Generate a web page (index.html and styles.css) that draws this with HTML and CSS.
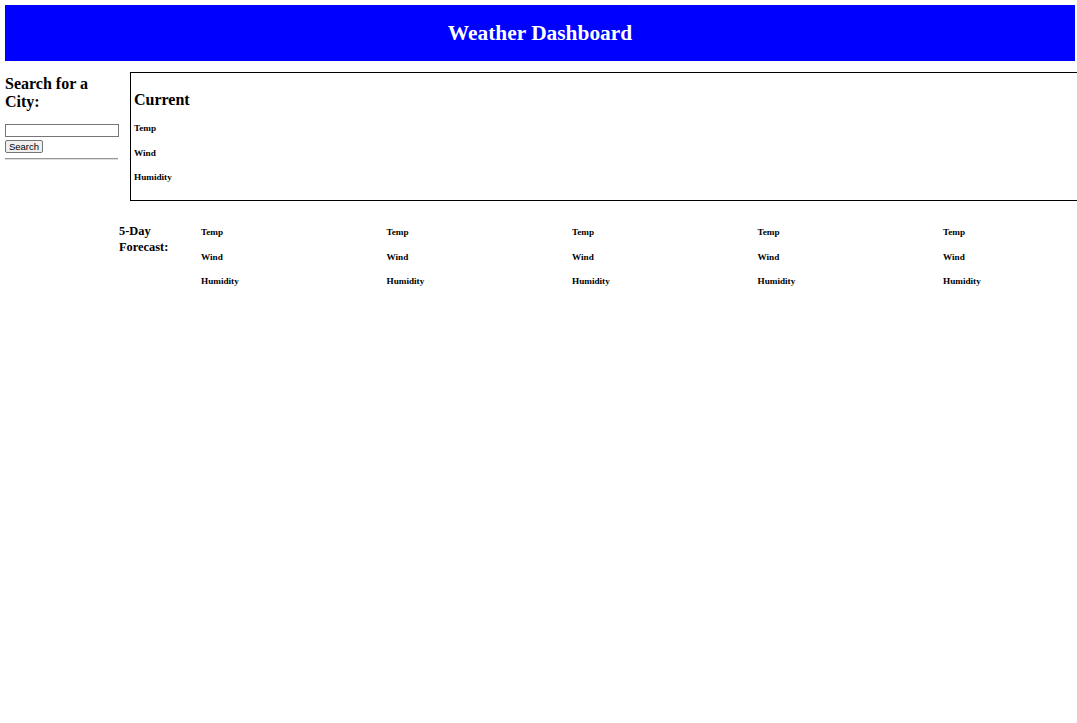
FILE: index.html
```html
<!DOCTYPE html>
<html>
<head>
<meta charset="utf-8">
<title>Weather Dashboard</title>
<link rel="stylesheet" href="styles.css">
</head>
<body>
<header class="top">
  <h1 class="title">Weather Dashboard</h1>
</header>
<div class="main">
  <aside class="side">
    <h3 class="side-title">Search for a City:</h3>
    <input class="city-input" type="text">
    <button class="search-btn">Search</button>
    <hr class="rule">
  </aside>
  <section class="current">
    <h3 class="current-title">Current</h3>
    <p class="stat">Temp</p>
    <p class="stat">Wind</p>
    <p class="stat">Humidity</p>
  </section>
</div>
<div class="forecast">
  <h4 class="forecast-title">5-Day<br>Forecast:</h4>
  <div class="days">
    <div class="day"><p class="stat">Temp</p><p class="stat">Wind</p><p class="stat">Humidity</p></div>
    <div class="day"><p class="stat">Temp</p><p class="stat">Wind</p><p class="stat">Humidity</p></div>
    <div class="day"><p class="stat">Temp</p><p class="stat">Wind</p><p class="stat">Humidity</p></div>
    <div class="day"><p class="stat">Temp</p><p class="stat">Wind</p><p class="stat">Humidity</p></div>
    <div class="day"><p class="stat">Temp</p><p class="stat">Wind</p><p class="stat">Humidity</p></div>
  </div>
</div>
</body>
</html>
```
FILE: styles.css
```css
html, body {
  margin: 0;
  padding: 0;
  overflow-x: hidden;
  background: #fff;
  color: #000;
  font-family: "Liberation Serif", "Times New Roman", serif;
}
.top {
  margin: 5px 2px 5px 5px;
  height: 56px;
  box-sizing: border-box;
  padding-top: 2px;
  background: #0000ff;
  display: flex;
  align-items: center;
  justify-content: center;
}
.title {
  margin: 0;
  color: #fff;
  font-size: 21.4px;
  font-weight: bold;
  line-height: 1;
}
.main {
  display: flex;
  align-items: flex-start;
  margin-top: 11px;
}
.side {
  width: 114px;
  margin-left: 5px;
  flex: none;
}
.side-title {
  margin: 3px 0 0 0;
  font-size: 16px;
  line-height: 18px;
}
.city-input {
  display: block;
  box-sizing: border-box;
  width: 114px;
  height: 13px;
  margin: 13px 0 0 0;
  padding: 0;
  border: 1px solid #767676;
  font-size: 9px;
}
.search-btn {
  display: block;
  box-sizing: border-box;
  width: 38px;
  height: 13px;
  margin: 3px 0 0 0;
  padding: 0;
  border: 1px solid #767676;
  border-radius: 2px;
  background: #efefef;
  font-family: "Liberation Sans", Arial, sans-serif;
  font-size: 9.5px;
  line-height: 11px;
  color: #000;
}
.rule {
  margin: 5px 0 0 0;
  border: none;
  border-top: 1px solid #999;
  border-bottom: 1px solid #ddd;
  height: 0;
  width: 113px;
}
.current {
  flex: none;
  box-sizing: border-box;
  width: 1000px;
  height: 129px;
  margin-left: 11px;
  padding: 18px 3px 0 3px;
  border: 1px solid #000;
}
.current-title {
  margin: 0 0 13px 0;
  font-size: 16px;
  line-height: 18px;
}
.stat {
  margin: 0 0 12px 0;
  font-size: 9.2px;
  font-weight: bold;
  line-height: 12.5px;
}
.forecast {
  display: flex;
  align-items: flex-start;
  margin-top: 24px;
  margin-left: 119px;
}
.forecast-title {
  flex: none;
  width: 82px;
  margin: -1px 0 0 0;
  font-size: 12.4px;
  line-height: 15.5px;
}
.days {
  display: flex;
  flex: none;
}
.day {
  width: 185.5px;
  padding-top: 1px;
}
```
